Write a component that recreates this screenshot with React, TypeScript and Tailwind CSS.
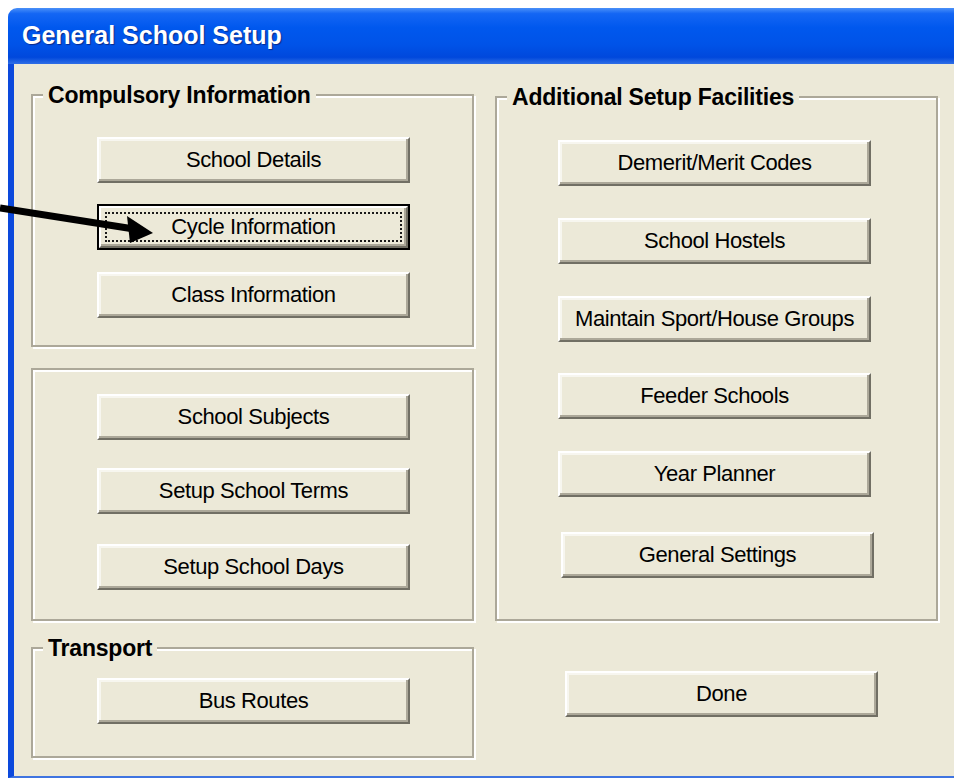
import type { ReactNode } from "react";

type BtnProps = {
  label: string;
  focused?: boolean;
  className?: string;
};

// Classic raised dialog button; the focused one gets the black frame and dotted rect
const DlgButton = ({ label, focused, className = "" }: BtnProps) => {
  if (focused) {
    return (
      <button
        className={`block w-[313px] h-[46px] shrink-0 border-2 border-black bg-[#ece9d8] p-0 ${className}`}
      >
        <span className="flex h-full w-full border-2 border-t-white border-l-white border-r-[#716f64] border-b-[#716f64] p-[4px] shadow-[inset_-2px_-2px_0_#aca899]">
          <span className="flex flex-1 items-center justify-center border-2 border-dotted border-[#1a1a1a] text-[22px] leading-none tracking-[-0.4px] text-black">
            {label}
          </span>
        </span>
      </button>
    );
  }
  return (
    <button
      className={`flex w-[313px] h-[46px] shrink-0 items-center justify-center border-2 border-t-white border-l-white border-r-[#716f64] border-b-[#716f64] bg-[#ece9d8] text-[22px] leading-none tracking-[-0.4px] text-black shadow-[inset_-2px_-2px_0_#aca899,inset_2px_2px_0_#f7f6ef] ${className}`}
    >
      {label}
    </button>
  );
};

type GroupProps = {
  title?: string;
  className?: string;
  children: ReactNode;
};

// Etched group box: grey line with a white line inside top/left and outside bottom/right
const GroupBox = ({ title, className = "", children }: GroupProps) => (
  <fieldset
    className={`m-0 min-w-0 border-2 border-[#aca899] p-0 shadow-[inset_2px_2px_0_#fff,2px_2px_0_#fff] ${className}`}
  >
    {title && (
      <legend className="ml-[10px] bg-[#ece9d8] px-[5px] text-[23px] font-bold leading-[24px] tracking-[-0.2px] text-black">
        {title}
      </legend>
    )}
    <div className="flex flex-col">{children}</div>
  </fieldset>
);

const PointerArrow = () => (
  <svg
    className="pointer-events-none absolute left-0 top-0"
    width="170"
    height="260"
    viewBox="0 0 170 260"
  >
    <line x1="0" y1="208" x2="134" y2="229" stroke="#000" strokeWidth="7" />
    <polygon points="127,216 153,233 130,243" fill="#000" />
  </svg>
);

export default function App() {
  return (
    <div className="relative h-[778px] w-[954px] overflow-hidden bg-white pl-[8px] pt-[8px] font-['Liberation_Sans',Arial,sans-serif]">
      <div className="flex h-[770px] w-[946px] flex-col overflow-hidden rounded-tl-[9px]">
        {/* caption bar */}
        <div className="flex h-[56px] shrink-0 items-center bg-[linear-gradient(180deg,#4a90f8_0%,#1466f4_10%,#0058ee_35%,#0053e8_65%,#0048dc_88%,#2f6ee6_100%)] pl-[14px]">
          <span className="pb-[2px] text-[25px] font-bold leading-none text-white [text-shadow:1px_1px_1px_#0a2a8a]">
            General School Setup
          </span>
        </div>

        {/* client area */}
        <div className="flex flex-1 border-b-2 border-l-[6px] border-b-[#3f74e0] border-l-[#0c49dc] bg-[#ece9d8] pl-[17px]">
          <div className="flex w-[443px] flex-col">
            <GroupBox title="Compulsory Information" className="mt-[19px] h-[264px]">
              <DlgButton label="School Details" className="ml-[64px] mt-[30px]" />
              <DlgButton label="Cycle Information" focused className="ml-[64px] mt-[21px]" />
              <DlgButton label="Class Information" className="ml-[64px] mt-[22px]" />
            </GroupBox>

            <GroupBox className="mt-[21px] h-[253px]">
              <DlgButton label="School Subjects" className="ml-[64px] mt-[24px]" />
              <DlgButton label="Setup School Terms" className="ml-[64px] mt-[28px]" />
              <DlgButton label="Setup School Days" className="ml-[64px] mt-[30px]" />
            </GroupBox>

            <GroupBox title="Transport" className="mt-[15px] h-[122px]">
              <DlgButton label="Bus Routes" className="ml-[64px] mt-[18px]" />
            </GroupBox>
          </div>

          <div className="ml-[21px] flex w-[443px] flex-col">
            <GroupBox title="Additional Setup Facilities" className="mt-[21px] h-[536px]">
              <DlgButton label="Demerit/Merit Codes" className="ml-[61px] mt-[31px]" />
              <DlgButton label="School Hostels" className="ml-[61px] mt-[32px]" />
              <DlgButton label="Maintain Sport/House Groups" className="ml-[61px] mt-[32px]" />
              <DlgButton label="Feeder Schools" className="ml-[61px] mt-[31px]" />
              <DlgButton label="Year Planner" className="ml-[61px] mt-[32px]" />
              <DlgButton label="General Settings" className="ml-[64px] mt-[35px]" />
            </GroupBox>

            <DlgButton label="Done" className="ml-[70px] mt-[50px]" />
          </div>
        </div>
      </div>

      <PointerArrow />
    </div>
  );
}
